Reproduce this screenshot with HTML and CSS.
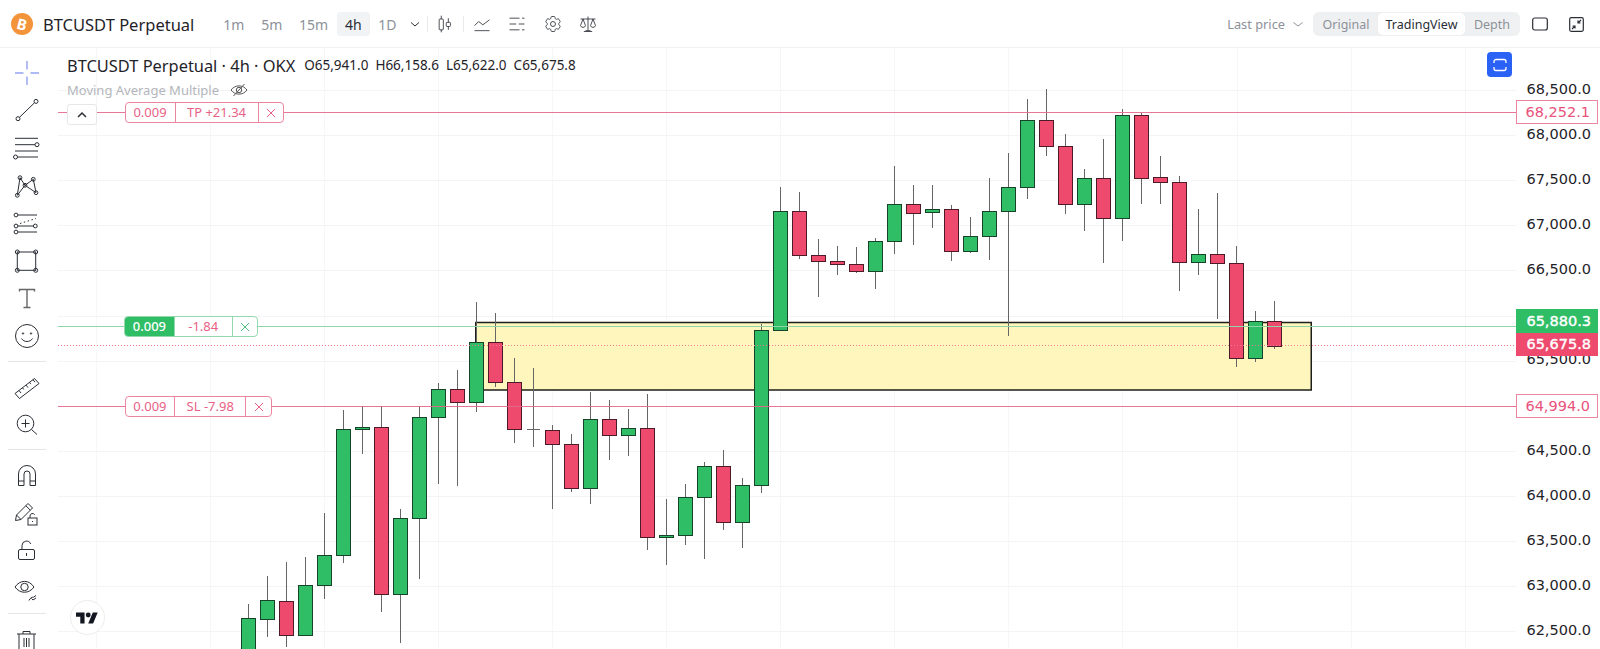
FILE: index.html
```html
<!DOCTYPE html>
<html lang="en">
<head>
  <meta charset="UTF-8" />
  <title>BTCUSDT Perpetual</title>
  <link rel="stylesheet" href="styles.css">
</head>
<body>

<header class="topbar">
  <span class="coin"><span class="coin-b">B</span></span>
  <span class="symbol">BTCUSDT Perpetual</span>

  <div class="timeframes">
    <span class="tf">1m</span>
    <span class="tf">5m</span>
    <span class="tf">15m</span>
    <span class="tf active">4h</span>
    <span class="tf">1D</span>
  </div>
  <svg class="chev" width="20" height="24" viewBox="0 0 20 24"><path d="M6 10.500l4 3.500 4-3.500"/></svg>

  <i class="bar-sep"></i>
  <span class="bar-icon">
    <svg width="20" height="20" viewBox="0 0 24 24"><path d="M7.500 2v4M7.500 19v3M16 5v5M16 15v4"/><rect x="5" y="6" width="5" height="13" rx="1"/><rect x="13.500" y="10" width="5" height="5" rx="1"/></svg>
  </span>
  <i class="bar-sep"></i>
  <span class="bar-icon">
    <svg width="20" height="20" viewBox="0 0 24 24"><path d="M3 14l5-5 5 4 8-6M3 20h18"/></svg>
  </span>
  <span class="bar-icon">
    <svg width="20" height="20" viewBox="0 0 24 24"><path d="M3 5h12M18 5h3M3 12h8M14 12h7M3 19h12M18 19h3"/></svg>
  </span>
  <span class="bar-icon">
    <svg width="20" height="20" viewBox="0 0 24 24"><path d="M9.594 3.940c.09-.542.56-.94 1.110-.94h2.593c.55 0 1.020.398 1.110.94l.213 1.281c.063.374.313.686.645.87.074.04.147.083.22.127.325.196.72.257 1.075.124l1.217-.456a1.125 1.125 0 0 1 1.370.49l1.296 2.247a1.125 1.125 0 0 1-.26 1.431l-1.003.827c-.293.241-.438.613-.43.992a7.723 7.723 0 0 1 0 .255c-.008.378.137.75.43.991l1.004.827c.424.35.534.955.26 1.430l-1.298 2.247a1.125 1.125 0 0 1-1.369.491l-1.217-.456c-.355-.133-.75-.072-1.076.124a6.470 6.470 0 0 1-.22.128c-.331.183-.581.495-.644.869l-.213 1.281c-.09.543-.56.94-1.110.94h-2.594c-.55 0-1.019-.398-1.110-.94l-.213-1.281c-.062-.374-.312-.686-.644-.87a6.520 6.520 0 0 1-.22-.127c-.325-.196-.72-.257-1.076-.124l-1.217.456a1.125 1.125 0 0 1-1.369-.49l-1.297-2.247a1.125 1.125 0 0 1 .26-1.431l1.004-.827c.292-.24.437-.613.43-.991a6.932 6.932 0 0 1 0-.255c.007-.38-.138-.751-.43-.992l-1.004-.827a1.125 1.125 0 0 1-.26-1.430l1.297-2.247a1.125 1.125 0 0 1 1.370-.491l1.216.456c.356.133.751.072 1.076-.124.072-.044.146-.086.22-.128.332-.183.582-.495.644-.869l.214-1.280z"/><circle cx="12" cy="12" r="3"/></svg>
  </span>
  <span class="bar-icon">
    <svg width="20" height="20" viewBox="0 0 24 24"><path d="M3 6h18M12 3v17M7 21h10M9 20h6M6 6l-3 8a3.200 3.200 0 0 0 6 0zM18 6l-3 8a3.200 3.200 0 0 0 6 0z"/></svg>
  </span>

  <div class="bar-right">
    <span class="last-price">Last price</span>
    <svg class="chev" width="20" height="24" viewBox="0 0 20 24"><path d="M5.500 10.500l4.500 3.500 4.500-3.500"/></svg>
    <div class="segment">
      <span class="seg-item">Original</span>
      <span class="seg-item active">TradingView</span>
      <span class="seg-item">Depth</span>
    </div>
    <svg class="win-icon" width="16" height="14" viewBox="0 0 16 14"><rect x="0.700" y="1" width="14.600" height="12" rx="2"/></svg>
    <svg class="win-icon" width="15" height="15" viewBox="0 0 15 15"><rect x="0.700" y="0.700" width="13.600" height="13.600" rx="1.500"/><path d="M9 6l3-3M9 3.500V6h2.500M6 9l-3 3M3.500 9H6v2.500"/></svg>
  </div>
</header>

<div class="main">
  <nav class="toolbar">
    <span class="tool"><svg width="28" height="28" viewBox="0 0 28 28" class="cross"><path d="M2 14h8.500M17.500 14H26M14 2v8.500M14 17.500V26"/></svg></span>
    <span class="tool"><svg width="28" height="28" viewBox="0 0 28 28"><circle cx="5" cy="22.700" r="2"/><circle cx="23" cy="5.400" r="2"/><path d="M6.500 21.300L21.500 6.800"/></svg></span>
    <span class="tool"><svg width="28" height="28" viewBox="0 0 28 28"><path d="M2 4.300h23M2 10.700h20M2 17h23M4.500 23H25"/><circle cx="24" cy="10.700" r="2"/><circle cx="2.500" cy="23" r="2"/></svg></span>
    <span class="tool"><svg width="28" height="28" viewBox="0 0 28 28"><path d="M4.300 23.300L7 5.700l5 7.600 8.300-6L23 20.700 12 13.300 4.300 23.300"/><circle cx="7" cy="5.700" r="1.900"/><circle cx="20.300" cy="7.300" r="1.900"/><circle cx="4.300" cy="23.300" r="1.900"/><circle cx="23" cy="20.700" r="1.900"/><circle cx="12" cy="13.300" r="1.900"/></svg></span>
    <span class="tool"><svg width="28" height="28" viewBox="0 0 28 28"><path d="M5 6h19M5 17h15M5 23h19"/><path d="M7 14.500L23 9.500" stroke-dasharray="1.500 2.500"/><circle cx="3" cy="6" r="1.900"/><circle cx="3" cy="17" r="1.900"/><circle cx="3" cy="23" r="1.900"/><circle cx="22.300" cy="17" r="1.900"/></svg></span>
    <span class="tool"><svg width="28" height="28" viewBox="0 0 28 28"><rect x="4.300" y="5" width="18.400" height="18.300"/><circle cx="4.300" cy="5" r="2"/><circle cx="22.700" cy="5" r="2"/><circle cx="4.300" cy="23.300" r="2"/><circle cx="22.700" cy="23.300" r="2"/></svg></span>
    <span class="tool"><svg width="28" height="28" viewBox="0 0 28 28" class="t-icon"><path d="M6.500 7.500V5.500h15v2M14 5.500v18M10.500 23.500h7"/></svg></span>
    <span class="tool"><svg width="28" height="28" viewBox="0 0 28 28"><circle cx="14" cy="14" r="11.500"/><circle cx="10" cy="11.500" r="0.700"/><circle cx="18" cy="11.500" r="0.700"/><path d="M8.500 16.500c2.500 4 8.500 4 11 0"/></svg></span>
    <i class="tool-sep"></i>
    <span class="tool"><svg width="28" height="28" viewBox="0 0 28 28"><path d="M2 19.500L21.500 4.500l4.500 5L6.500 24.500zM6 16.500l2 2.500M9.500 13.800l1.300 1.700M13 11.100l2 2.500M16.500 8.400l1.300 1.700M20 5.700l2 2.500"/></svg></span>
    <span class="tool"><svg width="28" height="28" viewBox="0 0 28 28"><circle cx="12.500" cy="12.500" r="8.300"/><path d="M18.500 18.500l5.500 5M12.500 8.500v8M8.500 12.500h8"/></svg></span>
    <i class="tool-sep narrow"></i>
    <span class="tool"><svg width="28" height="28" viewBox="0 0 28 28"><path d="M5.500 23.500V12a8.500 8.500 0 0 1 17 0v11.500h-5.500V12a3 3 0 0 0-6 0v11.500zM5.500 19h5.500M17 19h5.500"/></svg></span>
    <span class="tool"><svg width="28" height="28" viewBox="0 0 28 28"><path d="M2.500 21.500L3.500 16 15 4.500l4.500 4.500L8 20.500zM3.500 16L8 20.500M12.800 6.700l4.500 4.500"/><rect x="15" y="19" width="9" height="7"/><path d="M17 19v-2a2.500 2.500 0 0 1 4.700-1.200M19.500 22v1"/></svg></span>
    <span class="tool"><svg width="28" height="28" viewBox="0 0 28 28"><rect x="5.500" y="12.500" width="16" height="10" rx="1.500"/><path d="M9 12.500V8.500a4.500 4.500 0 0 1 8.700-1.500M13.500 16v3"/></svg></span>
    <span class="tool"><svg width="28" height="28" viewBox="0 0 28 28"><path d="M2 12c5-7.500 14-7.500 19 0-5 7-14 7-19 0z"/><circle cx="11.500" cy="12" r="3.700"/><path d="M16 25.500c1-2.500 3-3.500 4.500-3.300l2.500-1.700M18.500 23.500l1.500 1.500 3-2"/></svg></span>
    <i class="tool-sep"></i>
    <span class="tool"><svg width="28" height="28" viewBox="0 0 28 28"><path d="M4 8h19M10 8V5.500h7V8M6 8v17h15V8M11 12v9M13.500 12v9M16 12v9"/></svg></span>
  </nav>

  <section class="chart" id="chart">
    <svg class="canvas" id="canvas" width="1458" height="601" viewBox="58 48 1458 601"></svg>

    <div class="legend">
      <div class="legend-top">
        <span class="legend-name">BTCUSDT Perpetual · 4h · OKX</span>
        <span class="ohlc">O65,941.0</span>
        <span class="ohlc">H66,158.6</span>
        <span class="ohlc">L65,622.0</span>
        <span class="ohlc">C65,675.8</span>
      </div>
      <div class="legend-study">
        Moving Average Multiple
        <svg width="18" height="16" viewBox="0 0 18 16"><path d="M1 8c4-5.500 12-5.500 16 0-4 5.500-12 5.500-16 0zM3.500 14L14.500 2"/><circle cx="9" cy="8" r="2.700"/></svg>
      </div>
    </div>

    <button class="collapse"><svg width="12" height="8" viewBox="0 0 12 8"><path d="M2 6l4-4 4 4"/></svg></button>

    <div class="order red tag-tp">
      <span class="cell qty">0.009</span>
      <span class="cell pnl">TP +21.34</span>
      <span class="cell close"><svg width="10" height="10" viewBox="0 0 10 10"><path d="M1 1l8 8M9 1l-8 8"/></svg></span>
    </div>
    <div class="order green tag-entry">
      <span class="cell qty">0.009</span>
      <span class="cell pnl entry-pnl">-1.84</span>
      <span class="cell close"><svg width="10" height="10" viewBox="0 0 10 10"><path d="M1 1l8 8M9 1l-8 8"/></svg></span>
    </div>
    <div class="order red tag-sl">
      <span class="cell qty sl-qty">0.009</span>
      <span class="cell pnl">SL -7.98</span>
      <span class="cell close"><svg width="10" height="10" viewBox="0 0 10 10"><path d="M1 1l8 8M9 1l-8 8"/></svg></span>
    </div>

    <button class="snap"><svg width="16" height="14" viewBox="0 0 16 14"><path d="M2 5V3.500a2 2 0 0 1 2-2h8a2 2 0 0 1 2 2V5M2 9v1.500a2 2 0 0 0 2 2h8a2 2 0 0 0 2-2V9"/></svg></button>

    <span class="tv-logo"><svg width="22" height="12" viewBox="0 4 36 18"><path d="M14 22H7V11H0V4h14v18zM28 22h-8l7.500-18h8L28 22z"/><circle cx="20" cy="8" r="4"/></svg></span>
  </section>

  <aside class="axis">
    <span class="tick">68,500.0</span>
    <span class="tick">68,000.0</span>
    <span class="tick">67,500.0</span>
    <span class="tick">67,000.0</span>
    <span class="tick">66,500.0</span>
    <span class="tick">66,000.0</span>
    <span class="tick">65,500.0</span>
    <span class="tick">65,000.0</span>
    <span class="tick">64,500.0</span>
    <span class="tick">64,000.0</span>
    <span class="tick">63,500.0</span>
    <span class="tick">63,000.0</span>
    <span class="tick">62,500.0</span>

    <span class="price outline price-tp">68,252.1</span>
    <span class="price outline price-sl">64,994.0</span>
    <span class="price solid-green">65,880.3</span>
    <span class="price solid-red">65,675.8</span>
  </aside>
</div>

<script src="chart.js"></script>
</body>
</html>
```

FILE: styles.css
```css
* {
  box-sizing: border-box;
}
html, body {
  height: 100%;
}
body {
  margin: 0;
  height: 649px;
  overflow: hidden;
  background: white;
  color: #1f2329;
  font-family: "Noto Sans", sans-serif;
}
svg {
  display: block;
  fill: none;
  stroke: #2a2e35;
  stroke-width: 1;
}

/* top bar */
.topbar {
  display: flex;
  align-items: center;
  height: 48px;
  padding: 1px 16px 0 11px;
  border-bottom: 1px solid #f0f1f3;
}
.coin {
  display: flex;
  align-items: center;
  justify-content: center;
  width: 22px;
  height: 22px;
  border-radius: 50%;
  background: #f3943a;
}
.coin-b {
  color: white;
  font-size: 15px;
  font-weight: 700;
  transform: rotate(14deg);
}
.symbol {
  margin-left: 10px;
  font-size: 16.500px;
  white-space: nowrap;
}
.timeframes {
  display: flex;
  gap: 0.750px;
  margin-left: 21px;
}
.tf {
  display: flex;
  align-items: center;
  height: 24px;
  padding: 0 8px;
  border-radius: 3px;
  color: #8d9199;
  font-size: 14px;
}
.tf.active {
  background: #f2f3f4;
  color: #2a2e35;
}
.chev {
  flex: none;
}
.bar-sep {
  flex: none;
  width: 1px;
  height: 16px;
  background: #e8e9eb;
}
.timeframes + .chev + .bar-sep {
  margin-left: 2px;
}
.bar-icon {
  display: flex;
  flex: none;
  justify-content: center;
  width: 35.500px;
}
.bar-right {
  display: flex;
  align-items: center;
  margin-left: auto;
}
.last-price {
  color: #8d9199;
  font-size: 12.800px;
}
.bar-right .chev {
  margin: 0 5px 0 3px;
  stroke: #8d9199;
}
.segment {
  display: flex;
  height: 24px;
  padding: 1px;
  border-radius: 6px;
  background: #eff0f1;
}
.seg-item {
  display: flex;
  align-items: center;
  justify-content: center;
  width: 64px;
  border-radius: 5px;
  color: #8d9199;
  font-size: 12.500px;
}
.seg-item:last-child {
  width: 54px;
}
.seg-item.active {
  width: 87px;
  background: white;
  color: #2a2e35;
}
.win-icon {
  margin-left: 12px;
  stroke-width: 1.200;
}
.win-icon + .win-icon {
  margin-left: 21px;
}

/* main area */
.main {
  display: flex;
  height: 601px;
}
.toolbar {
  flex: none;
  display: flex;
  flex-direction: column;
  width: 58px;
  padding-top: 6px;
  overflow: hidden;
}
.tool {
  flex: none;
  display: flex;
  align-items: center;
  justify-content: center;
  width: 54px;
  height: 37.600px;
}
.cross {
  stroke: #93a4ef;
  stroke-width: 1.400;
}
.t-icon {
  stroke: #666;
  stroke-width: 1.400;
}
.tool-sep {
  flex: none;
  width: 38px;
  height: 1px;
  margin: 6px 0 7px 8px;
  background: #e4e5e7;
}
.tool-sep.narrow {
  margin-top: 5px;
}

/* chart */
.chart {
  position: relative;
  flex: 1;
  overflow: hidden;
}
.canvas {
  position: absolute;
  top: 0;
  left: 0;
  stroke: none;
}
.legend {
  position: absolute;
  top: 5px;
  left: 9px;
}
.legend-top {
  display: flex;
  align-items: center;
  height: 24px;
  white-space: nowrap;
}
.legend-name {
  margin-right: 9px;
  font-size: 16.400px;
}
.ohlc {
  margin-right: 7px;
  font-size: 13.500px;
}
.legend-study {
  display: flex;
  align-items: center;
  gap: 11px;
  height: 26px;
  color: #b3b6bb;
  font-size: 13px;
}
.legend-study svg {
  stroke: #555;
}
.collapse {
  position: absolute;
  top: 56px;
  left: 9px;
  display: flex;
  align-items: center;
  justify-content: center;
  width: 30px;
  height: 21px;
  padding: 0;
  border: 1px solid #e6e7e9;
  border-radius: 3px;
  background: white;
}
.collapse svg {
  stroke-width: 1.500;
}
.order {
  position: absolute;
  display: flex;
  height: 21px;
  border: 1px solid;
  border-radius: 4px;
  background: white;
  font-size: 13px;
  line-height: 17px;
  overflow: hidden;
}
.order.red {
  border-color: #ec86a0;
  color: #e85f86;
}
.order.green {
  border-color: #93d9ae;
}
.cell {
  display: flex;
  align-items: center;
  justify-content: center;
  border-right: 1px solid;
}
.red .cell {
  border-color: #ec86a0;
}
.green .cell {
  border-color: #93d9ae;
}
.cell.close {
  border-right: none;
}
.close svg {
  stroke: #e85f86;
}
.green .close svg {
  stroke: #4cc17f;
}
.qty {
  width: 50px;
}
.green .qty {
  background: #2fbd66;
  color: white;
  font-weight: 500;
}
.entry-pnl {
  width: 58px;
  color: #e85f86;
}
.tag-tp {
  top: 54px;
  left: 66.500px;
  width: 159px;
}
.tag-tp .pnl {
  width: 83px;
}
.tag-tp .close {
  width: 24px;
}
.tag-entry {
  top: 268px;
  left: 66px;
  width: 133.500px;
}
.tag-entry .close {
  width: 24px;
}
.tag-sl {
  top: 348px;
  left: 66.500px;
  width: 147.500px;
}
.tag-sl .pnl {
  width: 71px;
}
.tag-sl .close {
  width: 25px;
}
.snap {
  position: absolute;
  top: 4px;
  left: 1429px;
  display: flex;
  align-items: center;
  justify-content: center;
  width: 25px;
  height: 25px;
  padding: 0;
  border: none;
  border-radius: 4px;
  background: #2a62f5;
}
.snap svg {
  stroke: white;
  stroke-width: 1.300;
}
.tv-logo {
  position: absolute;
  top: 552px;
  left: 11.500px;
  display: flex;
  align-items: center;
  justify-content: center;
  width: 35px;
  height: 35px;
  border: 1px solid #eceded;
  border-radius: 50%;
  background: white;
}
.tv-logo svg {
  fill: #131722;
  stroke: none;
}

/* price axis */
.axis {
  position: relative;
  flex: none;
  display: flex;
  flex-direction: column;
  align-items: flex-end;
  width: 84px;
  padding: 18.500px 9px 0 0;
  overflow: hidden;
  font-family: "DejaVu Sans", sans-serif;
  font-size: 14.500px;
}
.tick {
  flex: none;
  height: 45.150px;
  line-height: 45.150px;
}
.price {
  position: absolute;
  left: 0;
  width: 82px;
  padding-right: 7px;
  text-align: right;
}
.outline {
  height: 24px;
  border: 1px solid #ec86a0;
  background: white;
  color: #e8527c;
  line-height: 22px;
}
.price-tp {
  top: 52px;
}
.price-sl {
  top: 346px;
}
.solid-green {
  top: 261px;
  height: 24px;
  background: #2fbd66;
  color: white;
  -webkit-text-stroke: 0.400px white;
  line-height: 24px;
}
.solid-red {
  top: 285px;
  height: 23px;
  background: #ee4a6e;
  color: white;
  -webkit-text-stroke: 0.400px white;
  line-height: 23px;
}
```

FILE: chart.js
```js
// [green?, high, body top, body bottom, low]
const candles = [
  [1, 604, 618, 660, 660], [1, 576, 600, 619, 637], [0, 562, 601, 635, 647], [1, 557, 585, 635, 635],
  [1, 513, 555, 585, 599], [1, 410, 429, 555, 563], [1, 406, 427, 429, 454], [0, 406, 427, 594, 612],
  [1, 509, 518, 594, 643], [1, 406, 417, 518, 579], [1, 383, 389, 417, 484], [0, 370, 389, 402, 486],
  [1, 302, 342, 402, 412], [0, 313, 342, 382, 387], [0, 358, 382, 429, 443], [2, 368, 429, 429, 447],
  [0, 425, 430, 444, 509], [0, 434, 444, 488, 492], [1, 392, 419, 488, 504], [0, 400, 419, 435, 460],
  [1, 409, 428, 435, 456], [0, 394, 428, 537, 550], [1, 499, 535, 537, 565], [1, 484, 497, 535, 545],
  [1, 462, 466, 497, 559], [0, 450, 466, 522, 530], [1, 478, 485, 522, 548], [1, 324, 330, 485, 493],
  [1, 187, 211, 330, 330], [0, 192, 211, 255, 259], [0, 239, 255, 261, 297], [0, 246, 261, 264, 275],
  [0, 247, 264, 271, 273], [1, 238, 241, 271, 289], [1, 166, 204, 241, 254], [0, 185, 204, 213, 245],
  [1, 185, 209, 212, 228], [0, 205, 209, 251, 261], [1, 217, 236, 251, 253], [1, 178, 211, 236, 260],
  [1, 153, 187, 211, 336], [1, 99, 120, 187, 199], [0, 89, 120, 146, 156], [0, 134, 146, 204, 214],
  [1, 169, 178, 204, 231], [0, 139, 178, 218, 263], [1, 109, 115, 218, 241], [0, 113, 115, 178, 204],
  [0, 156, 177, 182, 204], [0, 176, 182, 262, 291], [1, 209, 254, 262, 275], [0, 193, 254, 263, 319],
  [0, 246, 263, 358, 367], [1, 311, 321, 358, 362], [0, 301, 321, 346, 349]
];

const svg = document.getElementById('canvas');

function add(tag, attrs) {
  const el = document.createElementNS('http://www.w3.org/2000/svg', tag);
  for (const name in attrs) {
    el.setAttribute(name, attrs[name]);
  }
  svg.appendChild(el);
  return el;
}

function hline(y, stroke, extra) {
  add('line', Object.assign({ x1: 58, x2: 1516, y1: y, y2: y, stroke: stroke, 'stroke-width': 1 }, extra));
}

// grid
for (let x = 95.5; x < 1516; x += 114.1) {
  const px = Math.round(x) + 0.5;
  add('line', { x1: px, x2: px, y1: 48, y2: 649, stroke: '#f6f7f8', 'stroke-width': 1 });
}
for (let y = 90; y < 649; y += 45.1) {
  hline(Math.round(y) + 0.5, '#f3f4f5');
}

// supply zone
add('rect', { x: 475.75, y: 322.5, width: 835.5, height: 67.5, fill: '#fef6bc', stroke: '#1e1e1a', 'stroke-width': 1.5 });

// candles
candles.forEach(function (c, i) {
  const x = Math.round(248 + i * 19);
  add('line', { x1: x + 0.5, x2: x + 0.5, y1: c[1], y2: c[4], stroke: '#666', 'stroke-width': 1 });
  if (c[0] === 2) {
    add('line', { x1: x - 6, x2: x + 7, y1: c[2] + 0.5, y2: c[2] + 0.5, stroke: '#666', 'stroke-width': 1 });
    return;
  }
  add('rect', {
    x: x - 6.5,
    y: c[2] + 0.5,
    width: 14,
    height: c[3] - c[2],
    fill: c[0] ? '#2fbd66' : '#ee4a6e',
    stroke: c[0] ? '#17432a' : '#4d1a28',
    'stroke-width': 1
  });
});

// position lines
hline(112.5, '#e3688b', { opacity: 0.9 });
hline(326.5, '#8ed6a8');
hline(345.5, '#ee7a92', { 'stroke-dasharray': '1 2' });
hline(406.5, '#e3688b', { opacity: 0.9 });
```
